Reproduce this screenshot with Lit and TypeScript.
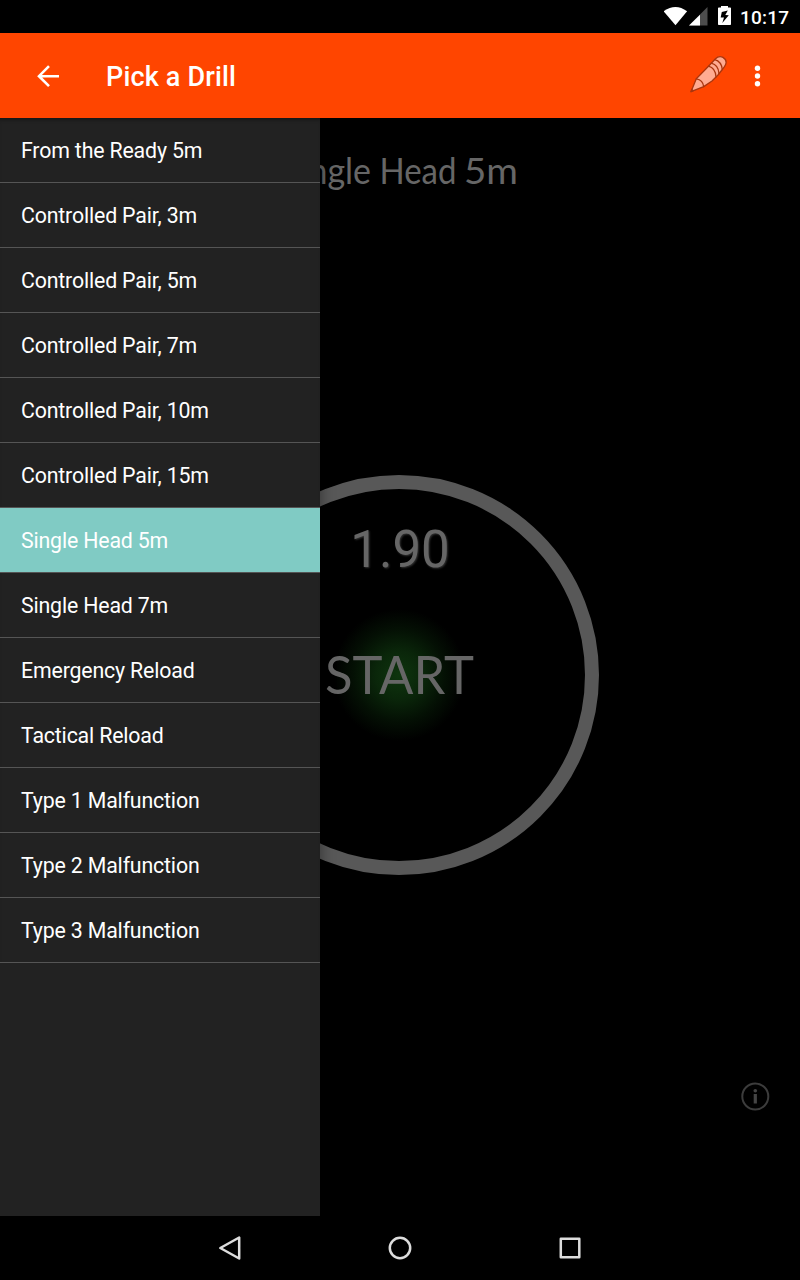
import { LitElement, html, css } from "lit";
import { customElement, state } from "lit/decorators.js";
import { classMap } from "lit/directives/class-map.js";

@customElement("status-bar")
class StatusBar extends LitElement {
  static styles = css`
    :host { display: flex; justify-content: flex-end; height: 33px; background: #000; color: #fff; }
    svg { display: block; flex: none; width: 75px; height: 33px; }
    .clock { width: 61px; box-sizing: border-box; padding-left: 1px; font: 500 19px/35px Roboto, sans-serif; letter-spacing: 0.2px; }
  `;
  render() {
    return html`
      <svg viewBox="0 0 75 33">
        <path d="M-.4 11.300Q11.500 2.500 23.100 11.300L11.500 25.300Z" fill="#fff" />
        <path d="M25 25.500 43.500 7V25.500Z" fill="#4d4d4d" />
        <path d="M25 25.500 36 14.700V25.500Z" fill="#fff" />
        <path d="M57 6h7V7.500h2.200q.8 0 .8.8v15.900q0 .8-.8.8H54.800q-.8 0-.8-.8V8.300q0-.8.8-.8H57Z" fill="#fff" />
        <path d="M63.800 10.500 57.800 12 56.700 17.500h3.300l-1.700 5.500 6.500-7.700-3.500-.3Z" fill="#000" />
      </svg>
      <div class="clock">10:17</div>
    `;
  }
}

@customElement("app-bar")
class AppBar extends LitElement {
  static styles = css`
    :host { display: flex; align-items: center; height: 85px; background: #ff4500; color: #fff; box-sizing: border-box; padding: 0 28px 0 34px; }
    svg { display: block; flex: none; }
    h1 { flex: 1; margin: 0; padding: 2px 0 0 44px; font: 500 27px/32px Roboto, sans-serif; letter-spacing: 0.170px; }
    .pencil { margin-right: 16px; margin-top: -1px; }
  `;
  render() {
    return html`
      <svg width="28" height="28" viewBox="0 0 28 28">
        <path d="M25 14.200H5M15 4.200 5 14.200 15 24.200" fill="none" stroke="#fff" stroke-width="2.600" />
      </svg>
      <h1>Pick a Drill</h1>
      <svg class="pencil" width="40" height="40" viewBox="0 0 40 40" fill="#ffab91" stroke="#a9360f" stroke-width="1.300" stroke-linejoin="round" stroke-linecap="round">
        <path d="M3 36.700 8.300 23.800 20.500 11.200 27.500 3.800Q31 .3 35 2.400 39.500 5.200 37.500 9.700 36.500 11.900 34.300 14.500L30 20 24 26 15.700 31.600Z" />
        <path d="M8.300 23.800Q15 25 15.700 31.600M20.500 11.200Q27.500 13 28 22M23.300 8.200Q30.500 10 31 18.700M26.700 4.700Q33.500 6.500 34.300 14.500" fill="none" />
        <path d="M3 36.700 3.800 34.500 5.300 35.700Z" fill="#a9360f" />
      </svg>
      <svg width="28" height="28" viewBox="0 0 28 28" fill="#fff">
        <circle cx="13.500" cy="6.200" r="2.700" /><circle cx="13.500" cy="14" r="2.700" /><circle cx="13.500" cy="21.800" r="2.700" />
      </svg>
    `;
  }
}

@customElement("drill-list")
class DrillList extends LitElement {
  @state() selected = 6;
  drills = [
    "From the Ready 5m", "Controlled Pair, 3m", "Controlled Pair, 5m", "Controlled Pair, 7m",
    "Controlled Pair, 10m", "Controlled Pair, 15m", "Single Head 5m", "Single Head 7m",
    "Emergency Reload", "Tactical Reload", "Type 1 Malfunction", "Type 2 Malfunction", "Type 3 Malfunction",
  ];
  static styles = css`
    :host { display: block; background: #222; color: #fff; box-shadow: 2px 0 12px rgba(0, 0, 0, 0.35); }
    ul { list-style: none; margin: 0; padding: 0; box-shadow: inset 0 4px 4px -3px rgba(0, 0, 0, 0.5); }
    li { height: 64px; border-bottom: 1px solid #555; padding-left: 21px; font: 400 21.330px/65px Roboto, sans-serif; letter-spacing: -0.170px; cursor: pointer; }
    .active { background: #80cbc4; }
  `;
  render() {
    return html`<ul>
      ${this.drills.map((name, i) => html`<li class=${classMap({ active: i === this.selected })} @click=${() => (this.selected = i)}>${name}</li>`)}
    </ul>`;
  }
}

@customElement("shot-timer")
class ShotTimer extends LitElement {
  static styles = css`
    :host { display: flex; flex-direction: column; align-items: center; background: #000; color: #666; }
    svg { display: block; flex: none; }
    .title { width: 400px; height: 60px; margin-top: 25px; font-family: Lato, sans-serif; font-size: 36.500px; fill: #666; }
    .dial { box-sizing: border-box; width: 400px; height: 400px; margin-top: 272px; border: 14px solid #585858; border-radius: 50%; display: flex; flex-direction: column; align-items: center; margin-right: 2px;
      background: radial-gradient(circle at 50% 50%, #0e350e 0, #0a260a 24px, #041004 46px, #000 66px); }
    .time { margin-top: 30px; padding-left: 2px; font: 400 51px/62px Roboto, sans-serif; text-shadow: 1px 1px 2px #333; }
    .start { width: 180px; height: 80px; margin-top: 54px; font-family: Lato, sans-serif; font-size: 51.500px; fill: #666; }
    .info { align-self: flex-end; margin: 206px 29px 0 0; }
  `;
  render() {
    return html`
      <svg class="title" viewBox="0 0 400 60"><text y="41"><tspan x="82" textLength="89" lengthAdjust="spacingAndGlyphs">Single</tspan> <tspan x="179.500" textLength="77" lengthAdjust="spacingAndGlyphs">Head</tspan> <tspan x="264" textLength="54" lengthAdjust="spacingAndGlyphs">5m</tspan></text></svg>
      <div class="dial">
        <div class="time">1.90</div>
        <svg class="start" viewBox="0 0 180 80"><text x="16" y="58.500" textLength="149" lengthAdjust="spacingAndGlyphs">START</text></svg>
      </div>
      <svg class="info" width="32" height="32" viewBox="0 0 32 32">
        <circle cx="16.300" cy="15.500" r="13" fill="none" stroke="#3c3c3c" stroke-width="2" />
        <circle cx="16.300" cy="9.700" r="1.800" fill="#444" />
        <path d="M14.700 13h3.200V22.500h-3.200Z" fill="#444" />
      </svg>
    `;
  }
}

@customElement("nav-bar")
class NavBar extends LitElement {
  static styles = css`
    :host { display: flex; justify-content: center; align-items: center; gap: 138px; height: 64px; background: #000; }
    svg { display: block; fill: none; stroke: #ddd; stroke-width: 2.500; stroke-linejoin: round; }
  `;
  render() {
    return html`
      <svg width="32" height="32" viewBox="0 0 32 32"><path d="M25.200 5.500V26.500L6.300 16Z" /></svg>
      <svg width="32" height="32" viewBox="0 0 32 32"><circle cx="16" cy="16" r="10.200" /></svg>
      <svg width="32" height="32" viewBox="0 0 32 32"><rect x="6.800" y="6.700" width="18.500" height="18.500" /></svg>
    `;
  }
}

@customElement("app-root")
class AppRoot extends LitElement {
  static styles = css`
    :host { display: flex; flex-direction: column; width: 800px; height: 1280px; background: #000; overflow: hidden; }
    .content { position: relative; flex: 1; display: flex; overflow: hidden; }
    .main { flex: 1; }
    .drawer { position: absolute; left: 0; top: 0; bottom: 0; width: 320px; }
  `;
  render() {
    return html`
      <status-bar></status-bar>
      <app-bar></app-bar>
      <div class="content">
        <shot-timer class="main"></shot-timer>
        <drill-list class="drawer"></drill-list>
      </div>
      <nav-bar></nav-bar>
    `;
  }
}
